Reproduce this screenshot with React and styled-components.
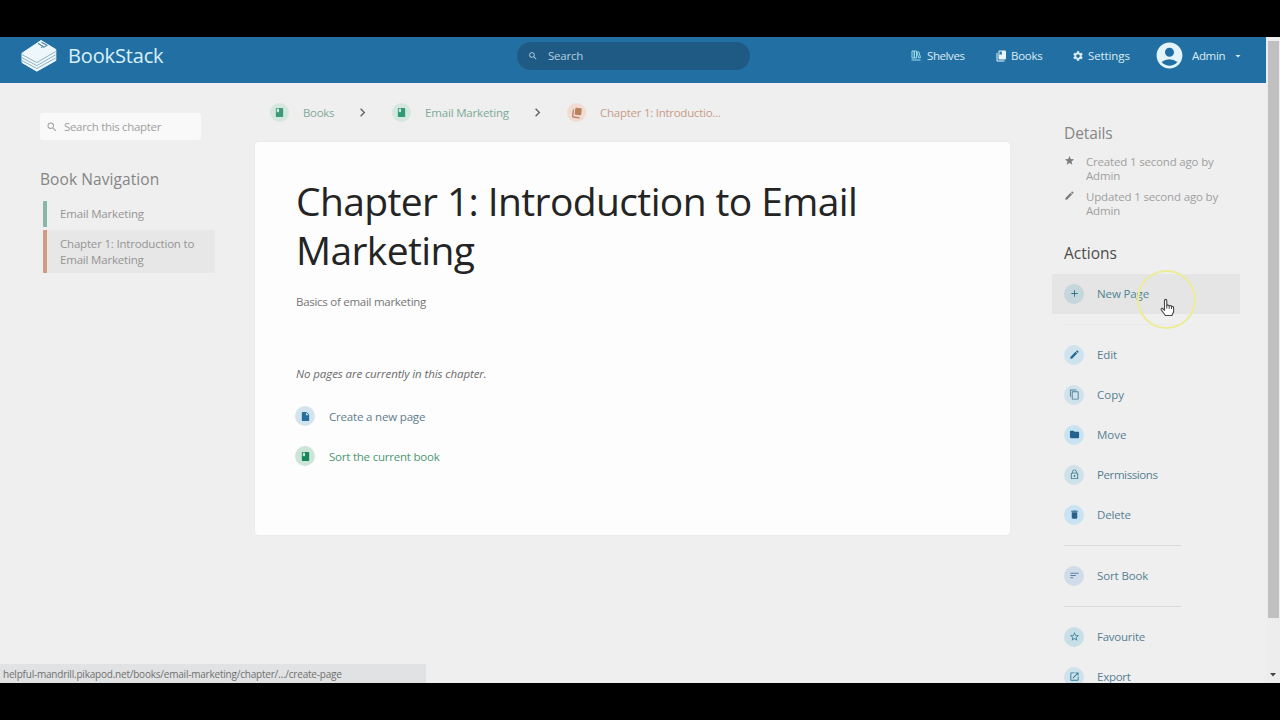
import React from "react";
import styled, { createGlobalStyle } from "styled-components";
import {
  MdSearch, MdBook, MdSettings, MdArrowDropDown, MdChevronRight, MdStar, MdEdit, MdAdd,
  MdContentCopy, MdFolder, MdLockOutline, MdDelete, MdSort, MdStarBorder, MdOpenInNew,
  MdInsertDriveFile, MdAccountCircle,
} from "react-icons/md";

const Global = createGlobalStyle`
  * { box-sizing: border-box; }
  body { margin: 0; background: #000; overflow: hidden; }
  svg { display: block; flex: none; }
`;

const Screen = styled.div`
  width: 1280px;
  height: 720px;
  padding: 37px 0;
  background: #000;
  font-family: "Open Sans", "Noto Sans", sans-serif;
  font-size: 11.5px;
`;
const Browser = styled.div`
  position: relative;
  display: flex;
  height: 646px;
  overflow: hidden;
  background: #efefef;
`;
const Page = styled.div`
  width: 1266px;
  flex: none;
`;
const Text = styled.span`
  white-space: nowrap;
  letter-spacing: ${(p) => p.$ls || 0}px;
`;

/* Header */
const Header = styled.header`
  display: grid;
  grid-template-columns: 517px 233px 1fr;
  height: 46px;
  padding-bottom: 9px;
  align-items: center;
  background: #2270a3;
  color: #dcebf4;
`;
const Brand = styled.a`
  display: flex;
  align-items: center;
  gap: 11px;
  padding-left: 21px;
  font-size: 20px;
  line-height: 36px;
  color: #d9f0fb;
`;
const HeaderSearch = styled.div`
  display: flex;
  align-items: center;
  gap: 10px;
  height: 28px;
  padding-left: 11px;
  border-radius: 15px;
  background: #1f5a84;
  color: #b5d0e0;
`;
const HeaderLinks = styled.nav`
  display: flex;
  align-items: center;
  justify-content: flex-start;
  padding-left: 161px;
  font-weight: 500;
`;
const HeaderLink = styled.a`
  display: flex;
  align-items: center;
  gap: ${(p) => p.$gap || 6}px;
  width: ${(p) => p.$w}px;
  flex: none;
`;

/* Columns */
const Columns = styled.div`
  display: grid;
  grid-template-columns: 255px 755px 1fr;
  align-items: start;
`;
const Left = styled.aside`
  padding: 30px 0 0 40px;
  color: #949494;
`;
const ChapterSearch = styled.div`
  display: flex;
  align-items: center;
  gap: 6px;
  width: 161px;
  height: 27px;
  margin-bottom: 28px;
  padding-left: 6px;
  border-radius: 3px;
  background: #f9f9f9;
  color: #a0a0a0;
`;
const SideTitle = styled.h5`
  margin: 0;
  font-size: 15.5px;
  font-weight: 400;
  line-height: 22px;
  color: ${(p) => p.$color || "#858585"};
`;
const NavList = styled.div`
  display: flex;
  flex-direction: column;
  gap: 3px;
  margin: 11px 0 0 3px;
  width: 172px;
`;
const NavItem = styled.a`
  display: flex;
  align-items: center;
  height: ${(p) => p.$h}px;
  padding-left: 13px;
  border-left: 4px solid ${(p) => p.$bar};
  border-radius: 1px;
  background: ${(p) => (p.$active ? "#e7e7e7" : "transparent")};
  line-height: 16px;
`;

const Center = styled.main``;
const Crumbs = styled.nav`
  display: flex;
  align-items: center;
  height: 59px;
  padding-left: 15px;
`;
const Crumb = styled.a`
  display: flex;
  align-items: center;
  gap: 14px;
  width: ${(p) => p.$w}px;
  color: ${(p) => p.$color};
`;
const Sep = styled.span`
  width: ${(p) => p.$w}px;
  color: #666;
`;
const Disc = styled.span`
  display: grid;
  place-items: center;
  width: ${(p) => p.$size || 19}px;
  height: ${(p) => p.$size || 19}px;
  flex: none;
  border-radius: 50%;
  background: ${(p) => p.$bg};
  color: ${(p) => p.$color};
`;
const Card = styled.article`
  height: 393px;
  padding: 34px 41px;
  border-radius: 4px;
  background: #fdfdfd;
  box-shadow: 0 0 2px rgba(0, 0, 0, 0.06);
`;
const Title = styled.h1`
  margin: 0;
  font-size: 39px;
  font-weight: 400;
  line-height: 49px;
  color: #242424;
`;
const Intro = styled.p`
  margin: 20px 0 0;
  line-height: 16px;
  color: #757575;
`;
const Empty = styled.p`
  margin: 56px 0 0;
  line-height: 16px;
  font-style: italic;
  color: #6a6a6a;
`;
const CardLinks = styled.div`
  display: flex;
  flex-direction: column;
  margin-top: 14px;
`;
const CardLink = styled.a`
  display: flex;
  align-items: center;
  gap: 14px;
  height: 40px;
  margin-left: -1px;
  color: ${(p) => p.$color};
`;

const Right = styled.aside`
  padding: 39px 26px 0 42px;
`;
const Meta = styled.div`
  display: flex;
  gap: 11px;
  height: 35px;
  padding-left: 12px;
  line-height: 14px;
  color: #a0a0a0;
  svg { color: #808080; }
`;
const MetaList = styled.div`
  padding-top: 11px;
  margin-bottom: 17px;
`;
const RightTitle = styled(SideTitle)`
  padding-left: 12px;
`;
const Actions = styled.div`
  padding-top: 10px;
`;
const Action = styled.a`
  display: flex;
  align-items: center;
  gap: 13px;
  height: 40px;
  padding: 0 0 1px 12px;
  background: ${(p) => (p.$hover ? "#e5e5e5" : "transparent")};
  color: ${(p) => p.$color || "#56808f"};
`;
const Rule = styled.hr`
  width: 117px;
  height: 1px;
  margin: 10px 0 10px 12px;
  border: 0;
  background: ${(p) => p.$c || "#d8d8d8"};
`;

const Track = styled.div`
  display: flex;
  flex-direction: column;
  align-items: center;
  justify-content: space-between;
  width: 14px;
  padding: 4px 0 2px;
  background: #ededed;
`;
const Thumb = styled.div`
  width: 11px;
  height: 577px;
  background: #c0c0c0;
`;
const Status = styled.div`
  position: absolute;
  left: 0;
  bottom: 0;
  display: flex;
  align-items: center;
  width: 426px;
  height: 19px;
  padding-left: 3px;
  background: #e0e2e3;
  font-size: 10px;
  color: #707070;
`;
const Halo = styled.div`
  position: absolute;
  left: 1137px;
  top: 233px;
  width: 59px;
  height: 59px;
  border: 2px solid #ecec96;
  border-radius: 50%;
`;
const Pointer = styled.svg`
  position: absolute;
  left: 1159px;
  top: 261px;
`;

const Logo = () => (
  <svg width="36" height="34" viewBox="0 0 36 34">
    <path d="M20 1.500 34.800 10.500V21.500L15.800 32.200 1 23.500V14.200Z" fill="#eef7fb" stroke="#eef7fb" strokeWidth="1" strokeLinejoin="round" />
    <g fill="none" stroke="#86a9bd" strokeWidth="0.9">
      <path d="M1 15.600 15.800 23.600 34.500 12.600" />
      <path d="M1 18.700 15.800 26.600 34.500 15.900" />
      <path d="M1 21.600 15.800 29.500 34.500 19.100" />
    </g>
    <path d="M17 4.600 22 7.300 20 8.500 M20.500 3.200 26 6.300 22.300 8.600" fill="none" stroke="#4f809c" strokeWidth="1.100" />
  </svg>
);
const ShelvesIcon = () => (
  <svg width="10" height="11" viewBox="0 0 20 22" fill="none" stroke="#9edbe6" strokeWidth="2">
    <path d="M2 2h4.500v14H2zM6.500 2H11v14H6.500zM12 4.500l3.500-1L19 15l-3.600 1zM1 20h18" />
  </svg>
);
const BooksIcon = () => (
  <svg width="12" height="12" viewBox="0 0 24 24" fill="#e9f4fa">
    <path d="M20 1H9a2 2 0 0 0-2 2v14c0 1.100.9 2 2 2h11a2 2 0 0 0 2-2V3a2 2 0 0 0-2-2zM9 3h4.500v7l-2.200-1.300L9 10z" />
    <path d="M3 6v15a2 2 0 0 0 2 2h14v-2H5V6z" />
  </svg>
);
const ChapterIcon = () => (
  <svg width="12" height="12" viewBox="0 0 24 24" fill="currentColor">
    <rect x="8" y="2" width="13" height="14" rx="1.500" transform="rotate(6 14 9)" />
    <path d="M5.500 5 4 17.500a2 2 0 0 0 1.800 2.200L17 21l-.2 1.800L4.500 21.500A2.500 2.500 0 0 1 2.200 18.700L3.600 4.800z" />
    <path d="M5.500 5 4 17.500a2 2 0 0 0 1.800 2.200L17 21" fill="none" stroke="currentColor" strokeWidth="1.500" />
  </svg>
);

const actionGroups = [
  [
    ["Edit", MdEdit, "#cfe3ee", "#276a93", -0.1],
    ["Copy", MdContentCopy, "#d0e2ec", "#4b7d95", 0],
    ["Move", MdFolder, "#c9e3f2", "#24628f", 0],
    ["Permissions", MdLockOutline, "#cfe1e9", "#3f7c90", -0.4],
    ["Delete", MdDelete, "#c9e3f2", "#28628a", -0.15],
  ],
  [["Sort Book", MdSort, "#d0dcea", "#5c7fa0", -0.12]],
  [
    ["Favourite", MdStarBorder, "#c8dfe7", "#3c8298", -0.25],
    ["Export", MdOpenInNew, "#cfe1ea", "#2e7c9a", -0.25],
  ],
];

export default function App() {
  return (
    <Screen>
      <Global />
      <Browser>
        <Page>
          <Header>
            <Brand><Logo /><Text $ls={-0.15}>BookStack</Text></Brand>
            <HeaderSearch><MdSearch size={10} /><Text $ls={-0.2}>Search</Text></HeaderSearch>
            <HeaderLinks>
              <HeaderLink $w={84}><ShelvesIcon /><Text $ls={-0.4}>Shelves</Text></HeaderLink>
              <HeaderLink $w={77} $gap={4}><BooksIcon /><Text $ls={-0.25}>Books</Text></HeaderLink>
              <HeaderLink $w={82} $gap={4}><MdSettings size={12} /><Text $ls={-0.1}>Settings</Text></HeaderLink>
              <HeaderLink $w={95} $gap={7}>
                <MdAccountCircle size={31} color="#e4f4fb" />
                <Text $ls={-0.35}>Admin</Text>
                <MdArrowDropDown size={12} />
              </HeaderLink>
            </HeaderLinks>
          </Header>
          <Columns>
            <Left>
              <ChapterSearch><MdSearch size={12} /><Text $ls={-0.32}>Search this chapter</Text></ChapterSearch>
              <SideTitle><Text $ls={0.08}>Book Navigation</Text></SideTitle>
              <NavList>
                <NavItem $h={26} $bar="#86b8a5"><Text $ls={-0.17}>Email Marketing</Text></NavItem>
                <NavItem $h={43} $bar="#cf9a84" $active>
                  <Text $ls={-0.19}>Chapter 1: Introduction to<br />Email Marketing</Text>
                </NavItem>
              </NavList>
            </Left>
            <Center>
              <Crumbs>
                <Crumb $w={84} $color="#85a99b"><Disc $bg="#d5e8e0" $color="#3f9a7a"><MdBook size={11} /></Disc><Text $ls={-0.35}>Books</Text></Crumb>
                <Sep $w={38}><MdChevronRight size={17} /></Sep>
                <Crumb $w={137} $color="#7daa98"><Disc $bg="#d5e8e0" $color="#2f9a73"><MdBook size={11} /></Disc><Text $ls={-0.17}>Email Marketing</Text></Crumb>
                <Sep $w={38}><MdChevronRight size={17} /></Sep>
                <Crumb $w={160} $color="#c79d88"><Disc $bg="#f0dcd1" $color="#b9825f"><ChapterIcon /></Disc><Text $ls={-0.26}>Chapter 1: Introductio...</Text></Crumb>
              </Crumbs>
              <Card>
                <Title><Text $ls={-0.62}>Chapter 1: Introduction to Email<br />Marketing</Text></Title>
                <Intro><Text $ls={-0.27}>Basics of email marketing</Text></Intro>
                <Empty><Text $ls={-0.09}>No pages are currently in this chapter.</Text></Empty>
                <CardLinks>
                  <CardLink $color="#5f7c8b"><Disc $size={20} $bg="#d3e4ee" $color="#276f9d"><MdInsertDriveFile size={11} /></Disc><Text $ls={-0.18}>Create a new page</Text></CardLink>
                  <CardLink $color="#4c9873"><Disc $size={20} $bg="#cbe6d8" $color="#17865a"><MdBook size={11} /></Disc><Text $ls={-0.22}>Sort the current book</Text></CardLink>
                </CardLinks>
              </Card>
            </Center>
            <Right>
              <RightTitle><Text $ls={-0.1}>Details</Text></RightTitle>
              <MetaList>
                <Meta><MdStar size={11} /><Text $ls={-0.18}>Created 1 second ago by<br />Admin</Text></Meta>
                <Meta><MdEdit size={11} /><Text $ls={-0.16}>Updated 1 second ago by<br />Admin</Text></Meta>
              </MetaList>
              <RightTitle $color="#4c4c4c"><Text>Actions</Text></RightTitle>
              <Actions>
                <Action $hover $color="#4f8490"><Disc $size={20} $bg="#c5d6dd" $color="#2f7388"><MdAdd size={11} /></Disc><Text $ls={-0.12}>New Page</Text></Action>
                <Rule $c="#e9e9e9" />
                {actionGroups.map((group, i) => (
                  <React.Fragment key={i}>
                    {i > 0 && <Rule />}
                    {group.map(([name, Icon, bg, color, ls]) => (
                      <Action key={name}><Disc $size={20} $bg={bg} $color={color}><Icon size={11} /></Disc><Text $ls={ls}>{name}</Text></Action>
                    ))}
                  </React.Fragment>
                ))}
              </Actions>
            </Right>
          </Columns>
        </Page>
        <Track>
          <Thumb />
          <svg width="8" height="12" viewBox="0 0 8 12"><path d="M1 4h6L4 7.500z" fill="#444" /></svg>
        </Track>
        <Status><Text $ls={-0.21}>helpful-mandrill.pikapod.net/books/email-marketing/chapter/.../create-page</Text></Status>
        <Halo />
        <Pointer width="18" height="22" viewBox="0 0 18 22">
          <path d="M5.500 2.500c0-1.500 2.300-1.500 2.300 0v5l1-.6 1.600.8 1.300-.2 1 .9 1.400.2.500 1.100v4.300l-1.800 3.500H6.500L2.300 12c-.7-1.300.7-2.200 1.700-1.200l1.500 1.500z" fill="#fff" stroke="#444" strokeWidth="1.100" strokeLinejoin="round" />
          <path d="M7.800 7.500v3M10.200 8v2.800M12.500 8.500v2.500" stroke="#444" strokeWidth="1" />
        </Pointer>
      </Browser>
    </Screen>
  );
}
